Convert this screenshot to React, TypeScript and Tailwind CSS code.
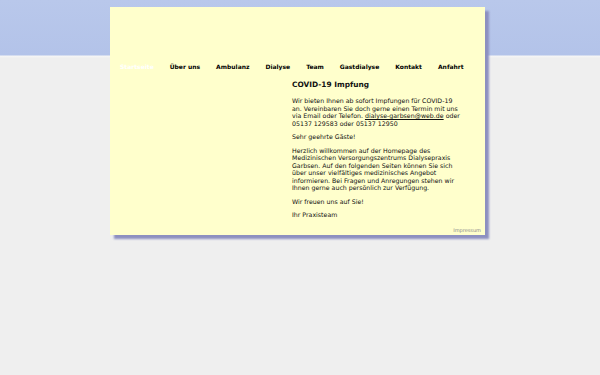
const NAV = ["Startseite", "Über uns", "Ambulanz", "Dialyse", "Team", "Gastdialyse", "Kontakt", "Anfahrt"];

export default function App() {
  return (
    <div
      className="min-h-[375px] w-full bg-[linear-gradient(to_bottom,#b9c8eb_0px,#b3c3e9_55px,#f6f6f6_56px,#efefef_58px,#efefef_100%)] pt-[7px]"
      style={{ fontFamily: '"DejaVu Sans", Verdana, sans-serif' }}
    >
      <div className="ml-[110px] flex h-[228px] w-[375px] flex-col bg-[#ffffcc] shadow-[4px_4px_2px_#8d90c0]">
        <nav className="mt-[55px] flex h-[10px] items-center gap-[16px] pl-[10px] text-[6px] font-bold leading-[10px] text-black">
          {NAV.map((item, i) => (
            <span key={item} className={i === 0 ? "text-white" : ""}>
              {item}
            </span>
          ))}
        </nav>

        <main className="ml-[182px] mt-[8px] w-[169px] text-[6.25px] leading-[7.5px] text-[#111]">
          <h1 className="text-[7.4px] font-bold leading-[10px]">COVID-19 Impfung</h1>
          <p className="mt-[7px]">
            Wir bieten Ihnen ab sofort Impfungen für COVID-19 an. Vereinbaren Sie doch gerne einen Termin mit uns via Email oder Telefon.{" "}
            <span className="underline underline-offset-[1px]">dialyse-garbsen@web.de</span> oder 05137 129583 oder 05137 12950
          </p>
          <p className="mt-[6px]">Sehr geehrte Gäste!</p>
          <p className="mt-[6px]">
            Herzlich willkommen auf der Homepage des Medizinischen Versorgungszentrums Dialysepraxis Garbsen. Auf den folgenden Seiten können Sie sich über unser vielfältiges medizinisches Angebot informieren. Bei Fragen und Anregungen stehen wir Ihnen gerne auch persönlich zur Verfügung.
          </p>
          <p className="mt-[6px]">Wir freuen uns auf Sie!</p>
          <p className="mt-[6px]">Ihr Praxisteam</p>
        </main>

        <div className="mt-auto pb-[2px] pr-[4px] text-right text-[5px] leading-[6px] text-[#8a8a8a]">Impressum</div>
      </div>
    </div>
  );
}
